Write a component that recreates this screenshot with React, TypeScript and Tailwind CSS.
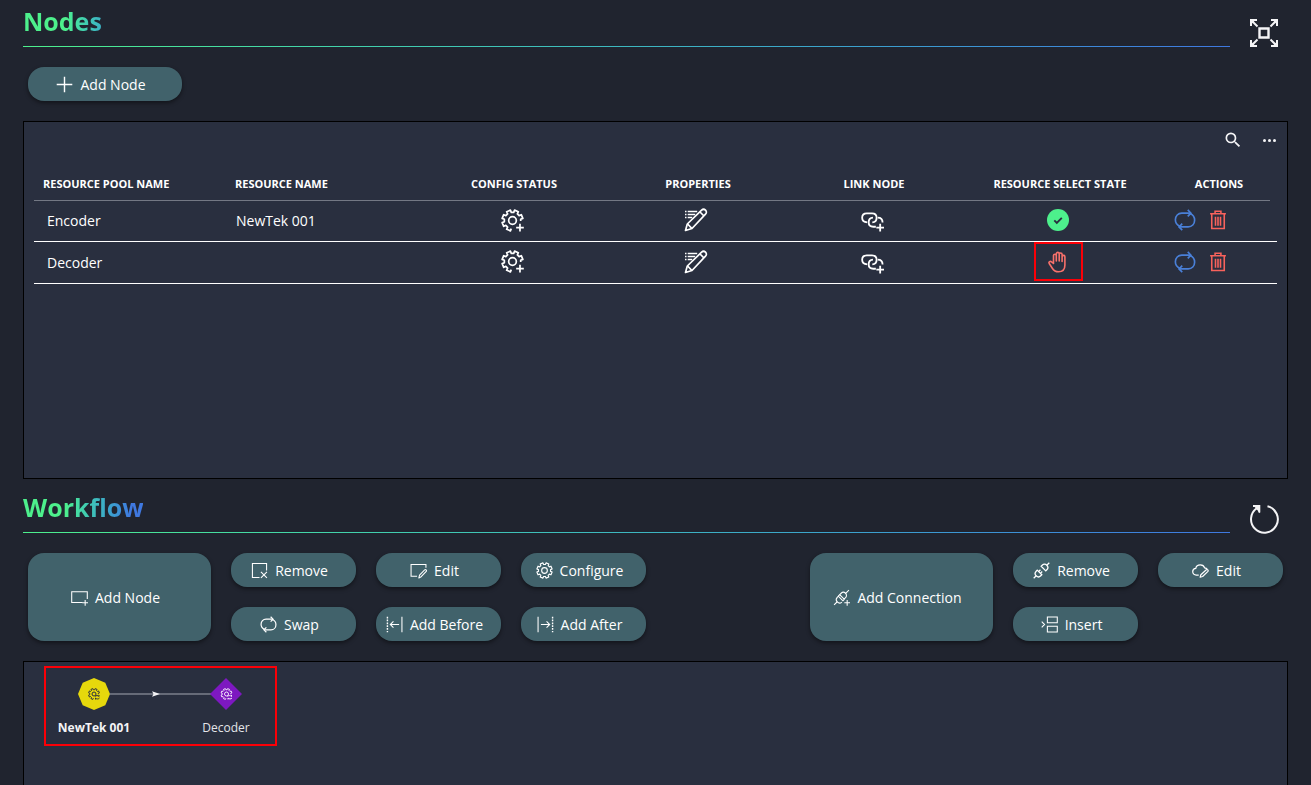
import type { ReactNode } from "react";
import { MdSearch } from "react-icons/md";

type IconProps = { className?: string };

function Svg({ className = "size-[17px]", children, width = 1.5 }: IconProps & { children: ReactNode; width?: number }) {
  return (
    <svg
      viewBox="0 0 24 24"
      fill="none"
      stroke="currentColor"
      strokeWidth={width}
      className={`shrink-0 ${className}`}
      aria-hidden="true"
    >
      {children}
    </svg>
  );
}

/** Outline of a cog, drawn from tooth `first` to tooth `last` (eight teeth per turn). */
function cogPath(first: number, last: number, closed: boolean) {
  const at = (r: number, deg: number) => {
    const a = ((deg + 22.5) * Math.PI) / 180;
    return `${(12 + r * Math.cos(a)).toFixed(2)} ${(12 + r * Math.sin(a)).toFixed(2)}`;
  };
  const parts: string[] = [];
  for (let k = first; k <= last; k++) {
    const c = k * 45;
    parts.push(at(8.6, c - 14), at(11, c - 11), at(11, c + 11), at(8.6, c + 14));
  }
  return `M${parts.join("L")}${closed ? "Z" : ""}`;
}

const OPEN_COG = `${cogPath(2, 7, false)}L20.600 12.500`;
const FULL_COG = cogPath(0, 7, true);

const Plus = () => (
  <Svg width={2}>
    <path d="M12 1v22M1 12h22" />
  </Svg>
);
const Cog = () => (
  <Svg width={1.6}>
    <path d={FULL_COG} strokeLinejoin="round" />
    <circle cx="12" cy="12" r="4" />
  </Svg>
);
const CogPlus = ({ className }: IconProps) => (
  <Svg className={className} width={1.8}>
    <path d={OPEN_COG} strokeLinejoin="round" />
    <circle cx="12" cy="12" r="4" />
    <path d="M19.800 15.500v8M15.800 19.500h8" />
  </Svg>
);
const PencilLines = () => (
  <Svg className="size-6" width={1.7}>
    <path d="M1.500 22.500l1.800-6.500L17.600 2.200c1.200-1.200 2.800-1.100 3.900 0s1.200 2.700 0 3.900L8 20.500z" strokeLinejoin="round" />
    <path d="M16 4l4 4M3.600 16l4.200 4.300" />
    <path d="M1 3.500h1.500M3.700 3.500h9.500M1 6.500h1.500M3.700 6.500h7.500M1 9.500h1.500M3.700 9.500h4.500" strokeWidth="1.4" />
  </Svg>
);
const LinkPlus = () => (
  <Svg className="size-[23px]" width={1.9}>
    <path d="M6.500 14C3 13.800 1.200 11.800 1.200 9.200 1.200 6.300 3.200 4.500 6 4.500h5.500c2.900 0 4.800 1.900 4.800 4.700 0 2.600-1.700 4.700-4.500 4.800" />
    <path d="M15.500 18.500h-2.700c-2.900 0-4.800-2-4.800-4.700 0-2.600 1.800-4.600 4.500-4.800" />
    <path d="M17.500 9c3.200 0 5 2 5 5.200" />
    <path d="M20 15.500v8M16 19.500h8" />
  </Svg>
);
const Cycle = ({ className = "size-[17px]", width = 1.7 }: IconProps & { width?: number }) => (
  <Svg className={className} width={width}>
    <path d="M6.500 19C3 17.500 1.500 14.800 1.500 11.800 1.500 7.500 4.500 4.500 8.500 4.500h9" />
    <path d="M15 1l3.500 3.500L15 8" />
    <path d="M17.500 5c3.500 1.500 5 4.200 5 7.200 0 4.300-3 7.300-7 7.300h-9" />
    <path d="M9 16l-3.500 3.500L9 23" />
  </Svg>
);
const Trash = () => (
  <Svg className="size-5" width={1.9}>
    <path d="M2.500 4.500h19M8.500 4V1.500h7V4M4.500 5v17.200h15V5" />
    <path d="M9 8v11M12 8v11M15 8v11" strokeWidth="1.900" />
  </Svg>
);
const RaisedHand = () => (
  <svg
    viewBox="0 0 22 22"
    className="mx-auto size-[22px]"
    fill="none"
    stroke="#f8716b"
    strokeWidth="1.600"
    strokeLinecap="round"
    strokeLinejoin="round"
    role="img"
    aria-label="Manual"
  >
    <path d="M6.500 12.500V4.700c0-1.900 2.800-1.900 2.800 0V10V2.800c0-1.900 2.900-1.900 2.900 0V10V3.400c0-1.900 2.900-1.900 2.900 0V10.500V5.800c0-1.900 2.800-1.900 2.800 0V14c0 4.200-2.500 6.800-6.400 6.800-3.100 0-4.800-1.400-6.200-3.600L2.200 12.500c-.9-1.700 1.200-2.900 2.300-1.600z" />
  </svg>
);
const SquareX = () => (
  <Svg>
    <path d="M12 22H2V2h20v10M14 14l8.500 8.500M22.500 14L14 22.500" />
  </Svg>
);
const RectPlus = () => (
  <Svg>
    <path d="M16 19H1V4h22v10M20 15.500v8M16 19.500h8" />
  </Svg>
);
const RectPencil = () => (
  <Svg>
    <path d="M10 20H1.500V3.500h21V8" />
    <path d="M12.500 22.500l1-4 7.200-7.400c1.600-1 3.200.6 2.300 2.200l-7.200 7.500z" strokeLinejoin="round" />
  </Svg>
);
const ArrowBefore = () => (
  <Svg>
    <path d="M2 1v22" strokeDasharray="2.500 1.500" strokeWidth="2" />
    <path d="M22.500 1v22M18.500 12H6M10.500 7.500L6 12l4.500 4.500" />
  </Svg>
);
const ArrowAfter = () => (
  <Svg>
    <path d="M22 1v22" strokeDasharray="2.500 1.500" strokeWidth="2" />
    <path d="M1.500 1v22M5.500 12H18M13.500 7.500L18 12l-4.500 4.500" />
  </Svg>
);
const PlugPlus = () => (
  <Svg>
    <path d="M1.500 22.500L6 18M17.500 6.500L22.500 1.500" />
    <path d="M12.500 18.500c-2 1.800-4.800 1.600-6.500-.2s-1.800-4.600 0-6.500l1.500-1.600 7 7M9.500 8l2-2c1.800-1.800 4.500-1.700 6.200 0s1.800 4.500 0 6.200l-2 2z" />
    <path d="M7.500 10.200l2-2.200M14.500 16.500l1.500-2.300M20 15.500v8M16 19.500h8" />
  </Svg>
);
const PlugOff = () => (
  <Svg width={1.8}>
    <path d="M1 23l3.500-3.500M19.500 4.500L23 1" />
    <path d="M6 11.500l6.500 6.500-1.500 1.500c-1.800 1.800-4.700 1.800-6.500 0s-1.800-4.700 0-6.500zM18 12.500L11.500 6 13 4.500c1.800-1.800 4.700-1.800 6.500 0s1.800 4.700 0 6.500z" />
    <path d="M8 13.500l2.500-2.500M10.500 16l2.500-2.500" />
  </Svg>
);
const InsertRows = () => (
  <Svg>
    <path d="M9 1.500h14v8H9zM9 14.500h14v8H9zM1 8l4 4-4 4" />
  </Svg>
);
const CloudPencil = () => (
  <Svg width={1.7}>
    <path d="M9.500 18.500H6c-2.800 0-5-2-5-4.700 0-2.600 1.800-4.500 4.300-4.700C5.800 6 8.500 4 11.700 4c3 0 5.300 1.600 6.100 4.200 1.900.1 3.200.9 4 2.300" />
    <path d="M11.500 21.500l1-3.500 7.700-7c1.600-1 3.300.7 2.300 2.300l-7.500 7.200z" strokeLinejoin="round" />
  </Svg>
);

function Expand() {
  return (
    <svg viewBox="0 0 30 30" className="size-[30px]" fill="none" stroke="currentColor" strokeWidth="2" aria-hidden="true">
      <path d="M10.500 10.500h9v9h-9z" strokeWidth="2.400" />
      <path d="M2 8V2h6M2 2l6.500 6.500M22 2h6v6M28 2l-6.500 6.500M2 22v6h6M2 28l6.500-6.500M22 28h6v-6M28 28l-6.500-6.500" />
      <path d="M2 2h4.500L2 6.500zM28 2h-4.500L28 6.500zM2 28h4.500L2 23.500zM28 28h-4.500l4.500-4.500z" fill="currentColor" stroke="none" />
    </svg>
  );
}

function Reload() {
  return (
    <svg viewBox="0 0 30 30" className="size-[30px]" fill="none" stroke="currentColor" strokeWidth="2" aria-hidden="true">
      <path d="M18.500 2.200A13.400 13.400 0 1 1 8.300 3.900" />
      <path d="M4 2.100h6.300v6.300" />
      <path d="M7 3h3v3.500z" fill="currentColor" />
    </svg>
  );
}

function SectionHeader({ title, action, icon }: { title: string; action: string; icon: ReactNode }) {
  return (
    <header className="flex h-[47px] items-end">
      <div className="flex-1">
        <h2 className="mb-[5px] w-[120px] bg-linear-to-r from-[#4df08c] from-35% to-[#3f78e0] to-90% bg-clip-text text-[25px] leading-10 font-bold whitespace-nowrap text-transparent">
          {title}
        </h2>
        <div className="h-px bg-linear-to-r from-[#4df08c] to-[#3f78e0]" />
      </div>
      <button type="button" aria-label={action} className="-mb-px mr-[9px] ml-[19px] text-[#f4f4f6]">
        {icon}
      </button>
    </header>
  );
}

function PillButton({ icon, label, className = "h-[34px] w-[125px]" }: { icon: ReactNode; label: string; className?: string }) {
  return (
    <button
      type="button"
      className={`flex items-center justify-center gap-[7px] rounded-2xl bg-[#41626b] pr-2 text-sm whitespace-nowrap text-white shadow-[0_2px_4px_rgba(0,0,0,0.45)] hover:bg-[#4b707a] ${className}`}
    >
      {icon}
      <span className="pt-[2px]">{label}</span>
    </button>
  );
}

const rows = [
  { pool: "Encoder", resource: "NewTek 001", selected: true },
  { pool: "Decoder", resource: "", selected: false },
];

const centeredHeads = ["CONFIG STATUS", "PROPERTIES", "LINK NODE", "RESOURCE SELECT STATE"];

function NodesTable() {
  return (
    <table className="w-full table-fixed border-separate border-spacing-0 text-sm text-white">
      <colgroup>
        <col className="w-[192px]" />
        <col className="w-[192px]" />
        <col className="w-[188px]" />
        <col className="w-[180px]" />
        <col className="w-[172px]" />
        <col className="w-[200px]" />
        <col className="w-[112px]" />
        <col className="w-[7px]" />
      </colgroup>
      <thead>
        <tr className="h-[34px] text-[11px] whitespace-nowrap *:border-b *:border-[#737884] *:font-bold">
          <th className="pl-[9px] text-left">RESOURCE POOL NAME</th>
          <th className="pl-[9px] text-left">RESOURCE NAME</th>
          {centeredHeads.map((h) => (
            <th key={h} className="pl-1 text-center">
              {h}
            </th>
          ))}
          <th className="pl-[10px] text-center">ACTIONS</th>
          <td className="border-none" />
        </tr>
      </thead>
      <tbody>
        {rows.map((r) => (
          <tr key={r.pool} className="h-[42px] *:border-b *:border-white first:h-[41px]">
            <td className="pl-[13px]">{r.pool}</td>
            <td className="pl-[10px]">{r.resource}</td>
            <td className="pb-[2px]">
              <button type="button" aria-label="Config status" className="mx-auto block">
                <CogPlus className="size-[23px]" />
              </button>
            </td>
            <td className="pb-[2px]">
              <button type="button" aria-label="Properties" className="mx-auto block">
                <PencilLines />
              </button>
            </td>
            <td className="pb-px">
              <button type="button" aria-label="Link node" className="mx-auto block">
                <LinkPlus />
              </button>
            </td>
            <td className="relative pb-[2px]">
              {r.selected ? (
                <svg viewBox="0 0 22 22" className="mx-auto size-[22px]" role="img" aria-label="Selected">
                  <circle cx="11" cy="11" r="11" fill="#4df08c" />
                  <path d="M7.300 11.300l2.500 2.500 5-5" fill="none" stroke="#292f3f" strokeWidth="1.900" />
                </svg>
              ) : (
                <>
                  <RaisedHand />
                  <span className="absolute inset-x-0 top-0 mx-auto h-[39px] w-[49px] border-2 border-[#fb0007]" />
                </>
              )}
            </td>
            <td colSpan={2} className="pb-[2px]">
              <div className="flex items-center gap-3 pl-4">
                <button type="button" aria-label="Swap" className="text-[#4a80d8]">
                  <Cycle className="size-[22px]" width={1.8} />
                </button>
                <button type="button" aria-label="Delete" className="text-[#f8625c]">
                  <Trash />
                </button>
              </div>
            </td>
          </tr>
        ))}
      </tbody>
    </table>
  );
}

function FlowDiagram() {
  return (
    <svg width="229" height="76" viewBox="46 668 229 76" role="img" aria-label="NewTek 001 to Decoder">
      <path d="M110 694h101" stroke="#7b808c" strokeWidth="1.500" />
      <path d="M152 691.200l8 2.800-8 2.800 1.500-2.800z" fill="#f4f4f6" />
      <path d="M94 678l11.300 4.700L110 694l-4.700 11.300L94 710l-11.300-4.700L78 694l4.700-11.300z" fill="#e6d80c" />
      <path d="M226 678l16 16-16 16-16-16z" fill="#7d18c0" />
      <g transform="translate(88 688) scale(0.5)" fill="none" stroke="#292f3f" strokeWidth="2">
        <path d={OPEN_COG} />
        <circle cx="12" cy="12" r="4" />
        <path d="M14 17c2-2.500 6-2.500 8 0v-3M23 20c-2 2.500-6 2.500-8 0v3" />
      </g>
      <g transform="translate(220.500 688) scale(0.5)" fill="none" stroke="#f4e9fb" strokeWidth="2">
        <path d={OPEN_COG} />
        <circle cx="12" cy="12" r="4" />
        <path d="M14 17c2-2.500 6-2.500 8 0v-3M23 20c-2 2.500-6 2.500-8 0v3" />
      </g>
      <text x="94" y="732" textAnchor="middle" fill="#f4f4f6" className="text-xs font-bold">
        NewTek 001
      </text>
      <text x="226" y="732" textAnchor="middle" fill="#e4e5e9" className="text-xs">
        Decoder
      </text>
    </svg>
  );
}

export default function App() {
  return (
    <main className="flex min-h-screen flex-col bg-[#20242f] px-[23px] font-['Open_Sans','Noto_Sans',sans-serif]">
      <SectionHeader title="Nodes" action="Expand" icon={<Expand />} />
      <div className="px-[5px] py-5">
        <PillButton icon={<Plus />} label="Add Node" className="h-[34px] w-[154px]" />
      </div>
      <section className="min-h-[358px] border border-black bg-[#292f3f] px-[10px]">
        <div className="flex h-[45px] items-start justify-end gap-[18px] pt-2 text-[#f4f4f6]">
          <button type="button" aria-label="Search">
            <MdSearch className="size-5" />
          </button>
          <button type="button" aria-label="More" className="flex h-5 w-4 items-center justify-center gap-[2px]">
            <span className="size-[3px] rounded-full bg-current" />
            <span className="size-[3px] rounded-full bg-current" />
            <span className="size-[3px] rounded-full bg-current" />
          </button>
        </div>
        <NodesTable />
      </section>

      <div className="mt-[7px]">
        <SectionHeader title="Workflow" action="Refresh" icon={<Reload />} />
      </div>
      <div className="flex justify-between gap-5 px-[5px] py-5">
        <div className="flex gap-5">
          <PillButton icon={<RectPlus />} label="Add Node" className="h-[88px] w-[183px]" />
          <div className="grid grid-cols-3 gap-5">
            <PillButton icon={<SquareX />} label="Remove" />
            <PillButton icon={<RectPencil />} label="Edit" />
            <PillButton icon={<Cog />} label="Configure" />
            <PillButton icon={<Cycle />} label="Swap" />
            <PillButton icon={<ArrowBefore />} label="Add Before" />
            <PillButton icon={<ArrowAfter />} label="Add After" />
          </div>
        </div>
        <div className="flex gap-5">
          <PillButton icon={<PlugPlus />} label="Add Connection" className="h-[88px] w-[183px]" />
          <div className="grid grid-cols-2 gap-5">
            <PillButton icon={<PlugOff />} label="Remove" />
            <PillButton icon={<CloudPencil />} label="Edit" />
            <PillButton icon={<InsertRows />} label="Insert" />
          </div>
        </div>
      </div>
      <section className="flex-1 border border-b-0 border-black bg-[#292f3f] pt-1 pl-5">
        <div className="flex w-fit border-2 border-[#fb0007]">
          <FlowDiagram />
        </div>
      </section>
    </main>
  );
}
